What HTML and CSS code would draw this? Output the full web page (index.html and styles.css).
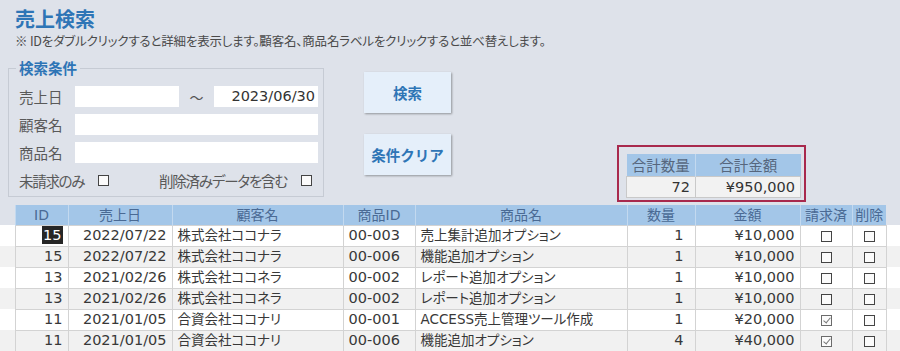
FILE: index.html
```html
<!DOCTYPE html>
<html lang="ja">
<head>
<meta charset="utf-8">
<title>売上検索</title>
<link rel="stylesheet" href="styles.css">
</head>
<body>
<div class="page">
  <header class="head">
    <h1 class="title">売上検索</h1>
    <p class="note">※ IDをダブルクリックすると詳細を表示します。顧客名、商品名ラベルをクリックすると並べ替えします。</p>
  </header>

  <div class="top">
    <fieldset class="cond">
      <legend class="cond-legend">検索条件</legend>
      <div class="cond-row first">
        <span class="lbl">売上日</span>
        <span class="box box-short"></span>
        <span class="tilde">～</span>
        <span class="box box-short box-right">2023/06/30</span>
      </div>
      <div class="cond-row">
        <span class="lbl">顧客名</span>
        <span class="box box-long"></span>
      </div>
      <div class="cond-row">
        <span class="lbl">商品名</span>
        <span class="box box-long"></span>
      </div>
      <div class="cond-row">
        <span class="chk-lbl chk-lbl-a">未請求のみ</span>
        <span class="cb"></span>
        <span class="chk-lbl chk-lbl-b">削除済みデータを含む</span>
        <span class="cb"></span>
      </div>
    </fieldset>

    <div class="btns">
      <button class="btn" type="button">検索</button>
      <button class="btn" type="button">条件クリア</button>
    </div>

    <div class="summary">
      <table class="sum">
        <colgroup><col class="sc1"><col class="sc2"></colgroup>
        <thead><tr><th>合計数量</th><th>合計金額</th></tr></thead>
        <tbody><tr><td>72</td><td>¥950,000</td></tr></tbody>
      </table>
    </div>
  </div>

  <table class="grid">
    <colgroup>
      <col class="c-pad-l"><col class="c-id"><col class="c-date"><col class="c-cust"><col class="c-pid">
      <col class="c-pname"><col class="c-qty"><col class="c-amt"><col class="c-billed"><col class="c-del"><col class="c-pad-r">
    </colgroup>
    <thead>
      <tr>
        <th class="pad"></th><th>ID</th><th>売上日</th><th>顧客名</th><th>商品ID</th><th>商品名</th><th>数量</th><th>金額</th><th>請求済</th><th>削除</th><th class="pad"></th>
      </tr>
    </thead>
    <tbody>
      <tr>
        <td class="pad"></td><td class="num"><span class="sel">15</span></td><td class="num">2022/07/22</td><td class="jp">株式会社ココナラ</td><td class="code">00-003</td><td class="jp">売上集計追加オプション</td><td class="num qty">1</td><td class="num">¥10,000</td><td class="ck"><span class="cb"></span></td><td class="ck"><span class="cb"></span></td><td class="pad"></td>
      </tr>
      <tr>
        <td class="pad"></td><td class="num">15</td><td class="num">2022/07/22</td><td class="jp">株式会社ココナラ</td><td class="code">00-006</td><td class="jp">機能追加オプション</td><td class="num qty">1</td><td class="num">¥10,000</td><td class="ck"><span class="cb"></span></td><td class="ck"><span class="cb"></span></td><td class="pad"></td>
      </tr>
      <tr>
        <td class="pad"></td><td class="num">13</td><td class="num">2021/02/26</td><td class="jp">株式会社ココネラ</td><td class="code">00-002</td><td class="jp">レポート追加オプション</td><td class="num qty">1</td><td class="num">¥10,000</td><td class="ck"><span class="cb"></span></td><td class="ck"><span class="cb"></span></td><td class="pad"></td>
      </tr>
      <tr>
        <td class="pad"></td><td class="num">13</td><td class="num">2021/02/26</td><td class="jp">株式会社ココネラ</td><td class="code">00-002</td><td class="jp">レポート追加オプション</td><td class="num qty">1</td><td class="num">¥10,000</td><td class="ck"><span class="cb"></span></td><td class="ck"><span class="cb"></span></td><td class="pad"></td>
      </tr>
      <tr>
        <td class="pad"></td><td class="num">11</td><td class="num">2021/01/05</td><td class="jp">合資会社ココナリ</td><td class="code">00-001</td><td class="jp">ACCESS売上管理ツール作成</td><td class="num qty">1</td><td class="num">¥20,000</td><td class="ck"><span class="cb on"></span></td><td class="ck"><span class="cb"></span></td><td class="pad"></td>
      </tr>
      <tr>
        <td class="pad"></td><td class="num">11</td><td class="num">2021/01/05</td><td class="jp">合資会社ココナリ</td><td class="code">00-006</td><td class="jp">機能追加オプション</td><td class="num qty">4</td><td class="num">¥40,000</td><td class="ck"><span class="cb on"></span></td><td class="ck"><span class="cb"></span></td><td class="pad"></td>
      </tr>
    </tbody>
  </table>
</div>
</body>
</html>
```

FILE: styles.css
```css
* { box-sizing: border-box; }

body {
  margin: 0;
  background: #dee2ea;
  font-family: "DejaVu Sans", "Noto Sans CJK JP", sans-serif;
  font-feature-settings: "palt";
  color: #333;
}

.page {
  width: 900px;
  height: 351px;
  overflow: hidden;
}

.head {
  padding: 5px 0 0 15px;
}

.title {
  margin: 0;
  font-family: "Noto Sans CJK JP", sans-serif;
  font-size: 20px;
  line-height: 27px;
  font-weight: bold;
  color: #2e75b6;
}

.note {
  margin: 0;
  font-family: "Noto Sans CJK JP", sans-serif;
  font-size: 12.5px;
  letter-spacing: -0.2px;
  line-height: 18px;
  color: #4a4a4a;
}

.top {
  display: flex;
  align-items: flex-start;
  margin-top: 10px;
}

/* search condition box */
.cond {
  margin: 0 0 0 8px;
  padding: 0 5px 5px 10px;
  border: 1px solid #c6cbd4;
  width: 316px;
  min-width: 0;
}

.cond-legend {
  padding: 0 3px;
  margin-left: -3px;
  font-family: "Noto Sans CJK JP", sans-serif;
  font-size: 14.5px;
  line-height: 16px;
  font-weight: bold;
  color: #2e75b6;
}

.cond-row {
  display: flex;
  align-items: center;
  height: 21px;
  margin-top: 7px;
}

.cond-row.first {
  margin-top: 10px;
}

.lbl {
  width: 56px;
  font-family: "Noto Sans CJK JP", sans-serif;
  font-size: 14.5px;
  color: #595959;
}

.box {
  display: block;
  height: 21px;
  background: #fff;
}

.box-short { width: 104px; }
.box-long { width: 243px; }

.box-right {
  text-align: right;
  padding-right: 3px;
  font-size: 14.5px;
  line-height: 21px;
  color: #333;
}

.tilde {
  width: 35px;
  text-align: center;
  font-family: "Noto Sans CJK JP", sans-serif;
  font-size: 14px;
  color: #555;
}

.chk-lbl {
  font-family: "Noto Sans CJK JP", sans-serif;
  font-size: 14.5px;
  color: #595959;
}

.chk-lbl-a { width: 79px; letter-spacing: -1.3px; }
.chk-lbl-b { width: 142px; margin-left: 50px; letter-spacing: -1.2px; }

.cb {
  display: inline-block;
  width: 11px;
  height: 11px;
  border: 1px solid #444;
  background: #fbfbfb;
  vertical-align: middle;
  position: relative;
}

.cb.on {
  border-color: #6b6b6b;
}

.cb.on::after {
  content: "";
  position: absolute;
  left: 3px;
  top: 0px;
  width: 3px;
  height: 6px;
  border-right: 1px solid #777;
  border-bottom: 1px solid #777;
  transform: rotate(40deg);
}

/* buttons */
.btns {
  display: flex;
  flex-direction: column;
  gap: 21px;
  margin: 12px 0 0 40px;
}

.btn {
  width: 87px;
  height: 41px;
  border: none;
  background: #e5effa;
  box-shadow: 1px 1px 2px rgba(0, 0, 0, 0.35);
  font-family: "Noto Sans CJK JP", sans-serif;
  font-size: 14.5px;
  font-weight: bold;
  color: #2e75b6;
  padding: 0;
}

/* summary */
.summary {
  margin: 85px 0 0 166px;
  border: 2px solid #a8294d;
  padding: 7px 3px 2px 7px;
}

.sum {
  border-collapse: collapse;
  table-layout: fixed;
  width: 174px;
  font-size: 14.5px;
}

.sc1 { width: 69px; }
.sc2 { width: 105px; }

.sum th {
  height: 22px;
  padding: 0;
  background: #a3c6e8;
  font-family: "Noto Sans CJK JP", sans-serif;
  font-weight: normal;
  color: #56667d;
  border-left: 1px solid #c3d9ef;
}

.sum th:first-child { border-left: none; }

.sum td {
  height: 21px;
  padding: 0 5px 0 0;
  background: #f2f2f2;
  border: 1px solid #c9c9c9;
  text-align: right;
  color: #333;
}

/* data grid */
.grid {
  margin-top: 3px;
  width: 900px;
  border-collapse: collapse;
  table-layout: fixed;
  font-size: 14.5px;
}

.c-pad-l { width: 15px; }
.c-id { width: 53px; }
.c-date { width: 104px; }
.c-cust { width: 171px; }
.c-pid { width: 72px; }
.c-pname { width: 212px; }
.c-qty { width: 68px; }
.c-amt { width: 105px; }
.c-billed { width: 52px; }
.c-del { width: 34px; }
.c-pad-r { width: 14px; }

.grid th {
  height: 20px;
  padding: 0;
  background: #a3c6e8;
  font-family: "DejaVu Sans", "Noto Sans CJK JP", sans-serif;
  font-size: 14px;
  font-weight: normal;
  color: #4a6a94;
  text-align: center;
  border-left: 1px solid #c3d9ef;
  line-height: 20px;
}

.grid th.pad {
  background: #dee2ea;
  border: none;
}

.grid td {
  height: 21px;
  padding: 0 5px;
  border: 1px solid #d3d3d3;
  white-space: nowrap;
  overflow: hidden;
  line-height: 19px;
  color: #383838;
}

.grid td.jp {
  font-size: 13.5px;
}

.grid td.pad {
  border: none;
  padding: 0;
}

.grid tbody tr:nth-child(odd) td { background: #fff; }
.grid tbody tr:nth-child(even) td { background: #f1f1f1; }

.grid td.num { text-align: right; }
.grid td.qty { padding-right: 11px; }
.grid td.ck { text-align: center; padding: 0; }

.sel {
  background: #262626;
  color: #fff;
  padding: 1px 1px;
}
```
